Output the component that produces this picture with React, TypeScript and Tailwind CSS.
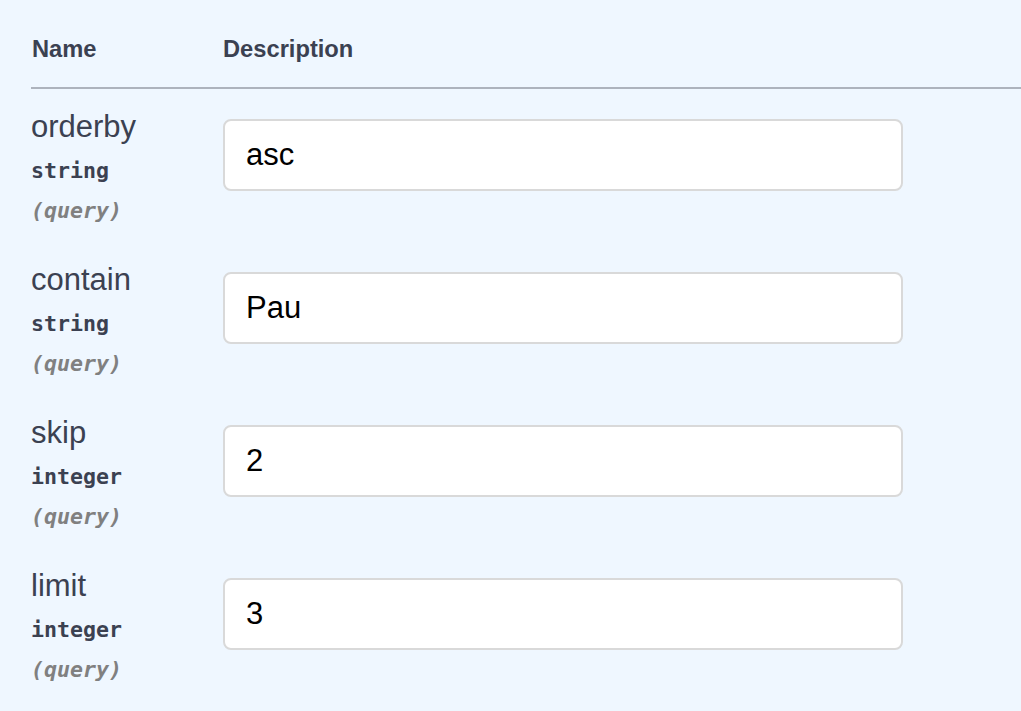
const params = [
  { name: "orderby", type: "string", value: "asc" },
  { name: "contain", type: "string", value: "Pau" },
  { name: "skip", type: "integer", value: "2" },
  { name: "limit", type: "integer", value: "3" },
]

const App = () => {
  return (
    <div className="min-h-screen w-full bg-[#eff7ff] pl-[31px] text-[#3b4151] font-['Liberation_Sans',Arial,sans-serif] overflow-hidden">
      <div className="flex border-b-2 border-[#adb3bd] pt-[35px] pb-[24px] text-[23.7px] leading-[28px] font-bold">
        <div className="w-[192px] pl-[1px]">Name</div>
        <div>Description</div>
      </div>
      {params.map((p) => (
        <div key={p.name} className="flex items-start pt-[20px] pb-[12px]">
          <div className="w-[192px] shrink-0">
            <div className="text-[31px] leading-[36px]">{p.name}</div>
            <div className="mt-[6px] font-['DejaVu_Sans_Mono',monospace] text-[21.6px] leading-[40px] font-bold">{p.type}</div>
            <div className="font-['DejaVu_Sans_Mono',monospace] text-[21.6px] leading-[39px] font-bold italic text-[#808080]">(query)</div>
          </div>
          <div className="mt-[10px]">
            <input
              defaultValue={p.value}
              className="w-[680px] h-[72px] rounded-[8px] border-2 border-[#d9d9d9] bg-white pl-[21px] text-[31px] text-black outline-none font-['Liberation_Sans',Arial,sans-serif]"
            />
          </div>
        </div>
      ))}
    </div>
  )
}

export default App
